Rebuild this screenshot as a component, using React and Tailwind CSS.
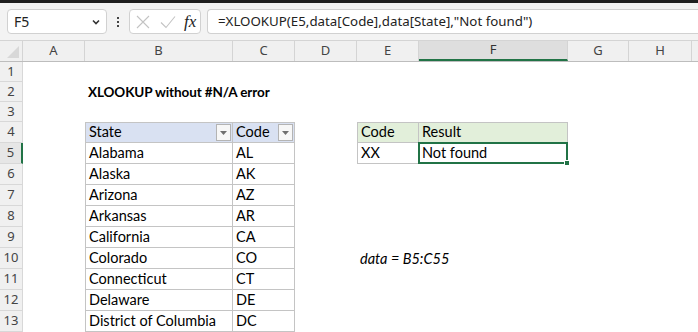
import React from "react";

const cols = [
  { key: "A", w: 62 },
  { key: "B", w: 148 },
  { key: "C", w: 62 },
  { key: "D", w: 62 },
  { key: "E", w: 62 },
  { key: "F", w: 149 },
  { key: "G", w: 61 },
  { key: "H", w: 63 },
];

const states = [
  ["Alabama", "AL"],
  ["Alaska", "AK"],
  ["Arizona", "AZ"],
  ["Arkansas", "AR"],
  ["California", "CA"],
  ["Colorado", "CO"],
  ["Connecticut", "CT"],
  ["Delaware", "DE"],
  ["District of Columbia", "DC"],
];

const cellFont = { fontFamily: "Lato, 'Liberation Sans', sans-serif" };
const uiFont = { fontFamily: "'Noto Sans', 'Open Sans', sans-serif" };

function FilterButton() {
  return (
    <div className="absolute right-[1px] top-[1px] flex h-[17px] w-[15px] items-center justify-center border border-[#b4b4b4] bg-[#f7f7f7]">
      <svg width="7" height="4" viewBox="0 0 7 4">
        <path d="M0 0h7L3.5 4z" fill="#707070" />
      </svg>
    </div>
  );
}

function RowHeader({ n, h, selected }) {
  return (
    <div
      className={`flex w-[23px] shrink-0 items-center justify-center border-b border-r text-[13px] text-[#444] ${
        selected
          ? "border-r-2 border-b-[#d8d8d8] border-r-[#217346] bg-[#e6e6e6]"
          : "border-[#d8d8d8] bg-[#f0f0f0]"
      }`}
      style={{ ...uiFont, height: h }}
    >
      {n}
    </div>
  );
}

function Cell({ w, className = "", children }) {
  return (
    <div
      className={`relative flex shrink-0 items-end pb-[1px] pl-[3px] text-[14.5px] leading-[18px] text-black ${className}`}
      style={{ ...cellFont, width: w }}
    >
      {children}
    </div>
  );
}

export default function App() {
  const rows = [];
  for (let r = 1; r <= 13; r++) {
    const h = r <= 3 ? 20 : 21;
    const idx = r - 5;
    rows.push(
      <div key={r} className="flex" style={{ height: h }}>
        <RowHeader n={r} h={h} selected={r === 5} />
        {/* A */}
        <Cell w={62} />
        {/* B */}
        {r === 2 ? (
          <Cell w={148} className="overflow-visible whitespace-nowrap !text-[13.5px] font-bold tracking-[-0.1px]">
            XLOOKUP without #N/A error
          </Cell>
        ) : r === 4 ? (
          <Cell w={148} className="border border-[#c4c4c4] bg-[#d9e1f2]">
            State
            <FilterButton />
          </Cell>
        ) : r >= 5 ? (
          <Cell w={148} className="border-b border-l border-r border-[#c4c4c4]">
            {states[idx][0]}
          </Cell>
        ) : (
          <Cell w={148} />
        )}
        {/* C */}
        {r === 4 ? (
          <Cell w={62} className="border-b border-r border-t border-[#c4c4c4] bg-[#d9e1f2]">
            Code
            <FilterButton />
          </Cell>
        ) : r >= 5 ? (
          <Cell w={62} className="border-b border-r border-[#c4c4c4]">
            {states[idx][1]}
          </Cell>
        ) : (
          <Cell w={62} />
        )}
        {/* D */}
        <Cell w={62} />
        {/* E */}
        {r === 4 ? (
          <Cell w={62} className="border border-[#c4c4c4] bg-[#e2efda]">
            Code
          </Cell>
        ) : r === 5 ? (
          <Cell w={62} className="border-b border-l border-r border-[#c4c4c4]">
            XX
          </Cell>
        ) : r === 10 ? (
          <Cell w={62} className="overflow-visible whitespace-nowrap italic">
            data = B5:C55
          </Cell>
        ) : (
          <Cell w={62} />
        )}
        {/* F */}
        {r === 4 ? (
          <Cell w={149} className="border-b border-r border-t border-[#c4c4c4] bg-[#e2efda]">
            Result
          </Cell>
        ) : r === 5 ? (
          <Cell w={149} className="border-b border-r border-[#c4c4c4]">
            Not found
            <div className="pointer-events-none absolute -left-[1px] -top-[1px] bottom-[-1px] right-[-1px] border-2 border-[#217346]" />
            <div className="absolute bottom-[-3px] right-[-3px] h-[6px] w-[6px] border border-white bg-[#217346]" />
          </Cell>
        ) : (
          <Cell w={149} />
        )}
        <Cell w={61} />
        <Cell w={63} />
      </div>
    );
  }

  return (
    <div className="h-[332px] w-[698px] overflow-hidden bg-white">
      {/* top strip */}
      <div className="h-[3px] bg-[#1f1f1f]" />
      {/* formula bar */}
      <div className="flex h-[37px] items-start gap-0 bg-[#f3f3f3] pl-[7px] pt-[6px]">
        <div
          className="flex h-[25px] w-[100px] items-center justify-between rounded-[4px] border border-[#d1d1d1] bg-white pl-[6px] pr-[5px] text-[14px] text-[#222]"
          style={uiFont}
        >
          <span>F5</span>
          <svg width="10" height="10" viewBox="0 0 10 10">
            <path d="M2 3.5l3 3 3-3" fill="none" stroke="#333" strokeWidth="1.6" />
          </svg>
        </div>
        <div className="flex h-[25px] w-[22px] flex-col items-center justify-center gap-[2px]">
          <span className="h-[2px] w-[2px] bg-[#444]" />
          <span className="h-[2px] w-[2px] bg-[#444]" />
          <span className="h-[2px] w-[2px] bg-[#444]" />
        </div>
        <div className="flex h-[25px] w-[72px] items-center rounded-[4px] border border-[#d1d1d1] bg-white pl-[5px]">
          <svg width="14" height="14" viewBox="0 0 14 14" className="ml-[1px]">
            <path d="M1 1l12 12M13 1L1 13" stroke="#c3c3c3" strokeWidth="1.1" />
          </svg>
          <svg width="16" height="14" viewBox="0 0 16 14" className="ml-[10px]">
            <path d="M1 7.5l5 5L15 1.5" fill="none" stroke="#c3c3c3" strokeWidth="1.1" />
          </svg>
          <span
            className="ml-[8px] text-[17px] italic text-[#222]"
            style={{ fontFamily: "'Liberation Serif', serif" }}
          >
            fx
          </span>
        </div>
        <div
          className="ml-[6px] flex h-[25px] flex-1 items-center rounded-l-[4px] border border-r-0 border-[#d1d1d1] bg-white pl-[10px] text-[13.3px] text-[#222]"
          style={uiFont}
        >
          =XLOOKUP(E5,data[Code],data[State],"Not found")
        </div>
      </div>
      {/* column headers */}
      <div className="flex h-[22px] border-b border-t border-b-[#bdbdbd] border-t-[#d4d4d4] bg-[#f0f0f0]">
        <div className="relative w-[23px] shrink-0 border-r border-[#d4d4d4]">
          <svg width="12" height="12" viewBox="0 0 12 12" className="absolute bottom-[3px] right-[3px]">
            <path d="M12 0V12H0z" fill="#d8d8d8" />
          </svg>
        </div>
        {cols.map((c) => (
          <div
            key={c.key}
            className={`flex shrink-0 items-center justify-center border-r text-[13px] ${
              c.key === "F"
                ? "border-b-2 border-b-[#217346] border-r-[#d4d4d4] bg-[#dedede] text-[#333]"
                : "border-[#d4d4d4] text-[#444]"
            }`}
            style={{ ...uiFont, width: c.w }}
          >
            {c.key}
          </div>
        ))}
        <div className="flex-1" />
      </div>
      {rows}
    </div>
  );
}
